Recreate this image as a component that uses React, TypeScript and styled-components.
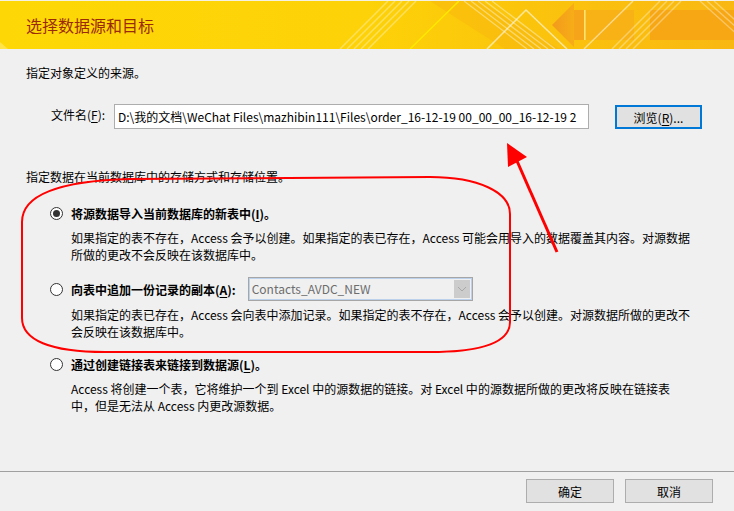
import React from "react";
import styled, { createGlobalStyle } from "styled-components";

const GlobalStyle = createGlobalStyle`
  html, body { margin: 0; padding: 0; background: #f0f0f0; }
  body {
    font-family: "Noto Sans CJK SC", "Noto Sans", sans-serif;
    font-size: 12px;
    color: #000;
  }
  * { box-sizing: border-box; }
`;

const Window = styled.div`
  position: relative;
  width: 734px;
  height: 511px;
  background: #f0f0f0;
  display: flex;
  flex-direction: column;
  overflow: hidden;
`;

const Header = styled.header`
  position: relative;
  flex: none;
  height: 49px;
  display: flex;
  align-items: center;
  padding: 1px 0 0 26px;
`;

const Banner = styled.svg`
  position: absolute;
  inset: 0;
`;

const Title = styled.h1`
  position: relative;
  margin: 0;
  font-size: 16px;
  font-weight: 400;
  line-height: 20px;
  color: #9a2a08;
`;

const Content = styled.main`
  flex: 1;
  display: flex;
  flex-direction: column;
  padding: 15px 0 0 26px;
`;

const Para = styled.p<{ $mt?: number }>`
  margin: ${(p) => p.$mt ?? 0}px 0 0;
  line-height: 17px;
  white-space: nowrap;
`;

const FileRow = styled.div`
  display: flex;
  align-items: center;
  height: 25px;
  margin: 23px 0 0 25px;
`;

const FieldLabel = styled.label`
  width: 63px;
  margin-top: -4px;
  line-height: 17px;
`;

const PathInput = styled.div`
  width: 475px;
  height: 25px;
  border: 1px solid #adadad;
  background: #fff;
  padding: 0 3px;
  line-height: 23px;
  white-space: nowrap;
  overflow: hidden;
`;

const BrowseButton = styled.button`
  align-self: flex-end;
  margin-left: 26px;
  width: 87px;
  height: 24px;
  padding: 0;
  border: 2px solid #0078d7;
  background: #e1e1e1;
  font: inherit;
  color: #000;
`;

const Key = styled.span`
  text-decoration: underline;
  text-underline-offset: 2px;
`;

const OptionList = styled.div`
  display: flex;
  flex-direction: column;
  padding-left: 24px;
  margin-top: 20px;
`;

const Option = styled.div<{ $mt?: number }>`
  display: flex;
  flex-direction: column;
  margin-top: ${(p) => p.$mt ?? 0}px;
`;

const OptionHead = styled.div<{ $h?: number }>`
  display: flex;
  align-items: center;
  height: ${(p) => p.$h ?? 17}px;
  font-weight: 700;
  line-height: 17px;
  white-space: nowrap;
`;

const Radio = styled.span<{ $checked?: boolean }>`
  flex: none;
  width: 13px;
  height: 13px;
  margin-right: 8px;
  border-radius: 50%;
  border: 1px solid #333;
  background: #fff;
  display: grid;
  place-items: center;
  &::after {
    content: "";
    display: ${(p) => (p.$checked ? "block" : "none")};
    width: 7px;
    height: 7px;
    border-radius: 50%;
    background: #333;
  }
`;

const Desc = styled.p<{ $mt?: number }>`
  margin: ${(p) => p.$mt ?? 7}px 0 0 21px;
  line-height: 17px;
  white-space: nowrap;
`;

const Combo = styled.div`
  display: flex;
  align-items: stretch;
  width: 225px;
  height: 24px;
  margin-left: 12px;
  border: 1px solid #a6a6a6;
  box-shadow: inset 0 0 0 1px #bcd2ec;
  background: #f0f0f0;
  padding: 2px;
  font-weight: 400;
`;

const ComboText = styled.span`
  flex: 1;
  padding-left: 1px;
  line-height: 18px;
  color: #6d6d6d;
  overflow: hidden;
`;

const ComboArrow = styled.span`
  width: 16px;
  background: #cccccc;
  display: grid;
  place-items: center;
`;

const Footer = styled.footer`
  flex: none;
  height: 40px;
  border-top: 1px solid #a0a0a0;
  display: flex;
  justify-content: flex-end;
  align-items: flex-start;
  gap: 11px;
  padding: 7px 21px 0 0;
`;

const DialogButton = styled.button`
  width: 88px;
  height: 24px;
  padding: 0;
  border: 1px solid #adadad;
  background: #e1e1e1;
  font: inherit;
  color: #000;
`;

const Annotations = styled.svg`
  position: absolute;
  left: 0;
  top: 0;
  pointer-events: none;
`;

const HeaderBanner = () => (
  <Banner width="734" height="49" viewBox="0 0 734 49">
    <defs>
      <linearGradient id="hdrbg" x1="0" x2="1" y1="0" y2="0">
        <stop offset="0" stopColor="#fed806" />
        <stop offset="0.5" stopColor="#fdd208" />
        <stop offset="0.72" stopColor="#fbc40c" />
        <stop offset="1" stopColor="#f9b812" />
      </linearGradient>
      <linearGradient id="hdrarrow" x1="0" x2="1" y1="0" y2="0">
        <stop offset="0" stopColor="#f39a1c" />
        <stop offset="1" stopColor="#f7ad17" />
      </linearGradient>
    </defs>
    <rect width="734" height="49" fill="url(#hdrbg)" />
    <rect width="734" height="1" fill="#f5f1e2" />
    <polygon points="0,42 8,49 0,49" fill="#ffe866" opacity="0.7" />
    <polygon points="430,1 480,1 560,49 505,49" fill="#f8b80f" opacity="0.55" />
    <g stroke="#fff" strokeWidth="1.4" opacity="0.35">
      <line x1="340" y1="49" x2="388" y2="1" />
      <line x1="347" y1="49" x2="395" y2="1" />
      <line x1="354" y1="49" x2="402" y2="1" />
      <line x1="361" y1="49" x2="409" y2="1" />
      <line x1="368" y1="49" x2="416" y2="1" />
    </g>
    <line x1="410" y1="49" x2="459" y2="1" stroke="#ffe800" strokeWidth="1.5" />
    <g stroke="#fff" strokeWidth="1.3" opacity="0.4">
      <line x1="464" y1="1" x2="527" y2="49" />
      <line x1="471" y1="1" x2="534" y2="49" />
      <line x1="478" y1="1" x2="541" y2="49" />
      <line x1="485" y1="1" x2="548" y2="49" />
      <line x1="492" y1="1" x2="555" y2="49" />
    </g>
    <polyline points="487,49 526,10 567,49" fill="none" stroke="#fff" strokeWidth="1.5" opacity="0.6" />
    <polygon points="552,25 574,3 574,47" fill="url(#hdrarrow)" />
    <rect x="574" y="10" width="10" height="30" fill="#f6a51a" />
    <rect x="584" y="10" width="1.5" height="30" fill="#fde27a" />
    <rect x="586" y="10" width="48" height="30" fill="#f8b216" />
    <rect x="650" y="10" width="84" height="30" fill="#f7a714" />
    <line x1="584" y1="49" x2="633" y2="1" stroke="#fff" strokeWidth="1.4" opacity="0.5" />
    <g stroke="#fff" strokeWidth="1.4" opacity="0.35">
      <line x1="612" y1="49" x2="660" y2="1" />
      <line x1="619" y1="49" x2="667" y2="1" />
      <line x1="626" y1="49" x2="674" y2="1" />
      <line x1="633" y1="49" x2="681" y2="1" />
      <line x1="700" y1="1" x2="740" y2="37" />
      <line x1="707" y1="1" x2="747" y2="37" />
      <line x1="714" y1="1" x2="754" y2="37" />
    </g>
  </Banner>
);

export default function App() {
  return (
    <>
      <GlobalStyle />
      <Window>
        <Header>
          <HeaderBanner />
          <Title>选择数据源和目标</Title>
        </Header>
        <Content>
          <Para>指定对象定义的来源。</Para>
          <FileRow>
            <FieldLabel>
              文件名(<Key>F</Key>):
            </FieldLabel>
            <PathInput>D:\我的文档\WeChat Files\mazhibin111\Files\order_16-12-19 00_00_00_16-12-19 2</PathInput>
            <BrowseButton>
              浏览(<Key>R</Key>)...
            </BrowseButton>
          </FileRow>
          <Para $mt={39}>指定数据在当前数据库中的存储方式和存储位置。</Para>
          <OptionList>
            <Option>
              <OptionHead>
                <Radio $checked />
                将源数据导入当前数据库的新表中(<Key>I</Key>)。
              </OptionHead>
              <Desc>
                如果指定的表不存在，Access 会予以创建。如果指定的表已存在，Access 可能会用导入的数据覆盖其内容。对源数据
                <br />
                所做的更改不会反映在该数据库中。
              </Desc>
            </Option>
            <Option $mt={14}>
              <OptionHead $h={24}>
                <Radio />
                向表中追加一份记录的副本(<Key>A</Key>):
                <Combo>
                  <ComboText>Contacts_AVDC_NEW</ComboText>
                  <ComboArrow>
                    <svg width="10" height="6" viewBox="0 0 10 6">
                      <polyline points="1,1 5,5 9,1" fill="none" stroke="#a8a8a8" strokeWidth="1" />
                    </svg>
                  </ComboArrow>
                </Combo>
              </OptionHead>
              <Desc $mt={5}>
                如果指定的表已存在，Access 会向表中添加记录。如果指定的表不存在，Access 会予以创建。对源数据所做的更改不
                <br />
                会反映在该数据库中。
              </Desc>
            </Option>
            <Option $mt={16}>
              <OptionHead>
                <Radio />
                通过创建链接表来链接到数据源(<Key>L</Key>)。
              </OptionHead>
              <Desc>
                Access 将创建一个表，它将维护一个到 Excel 中的源数据的链接。对 Excel 中的源数据所做的更改将反映在链接表
                <br />
                中，但是无法从 Access 内更改源数据。
              </Desc>
            </Option>
          </OptionList>
        </Content>
        <Footer>
          <DialogButton>确定</DialogButton>
          <DialogButton>取消</DialogButton>
        </Footer>
        <Annotations width="734" height="511" viewBox="0 0 734 511">
          <path
            d="M22 222 C22 196 55 181 130 179 L430 177 C478 177 510 192 510 214 L510 322 C510 344 478 352 430 352 L105 352 C50 352 22 340 22 318 Z"
            fill="none"
            stroke="#ff0000"
            strokeWidth="2"
          />
          <line x1="557" y1="252" x2="517" y2="161" stroke="#ff0000" strokeWidth="3" />
          <polygon points="507,143 527,157 508,167" fill="#ff0000" />
        </Annotations>
      </Window>
    </>
  );
}
